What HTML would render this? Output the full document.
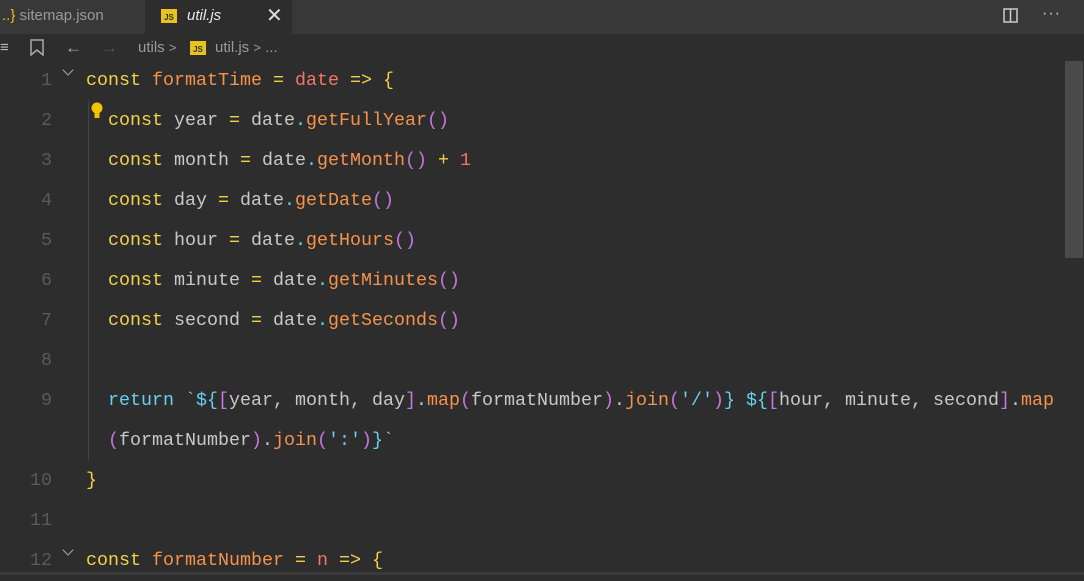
<!DOCTYPE html>
<html><head><meta charset="utf-8"><style>
*{margin:0;padding:0;box-sizing:border-box}
body{width:1084px;height:575px;background:#2d2d2d;overflow:hidden;position:relative;font-family:"Liberation Sans",sans-serif}
.tabs{position:absolute;left:0;top:0;width:1084px;height:34px;background:#383838}
.tab{position:absolute;top:0;height:34px;font-size:15px;color:#9a9a9a;line-height:32px}
.act{left:145px;width:147px;background:#2d2d2d;color:#e8e8e8;font-style:italic}
.js{display:inline-block;width:16px;height:14px;background:#e8c21e;color:#333;font-size:8px;font-style:normal;line-height:18px;text-align:center;vertical-align:middle;font-weight:bold}
.bc{position:absolute;top:34px;left:0;width:1065px;height:27px;font-size:15px;color:#9a9a9a;line-height:27px}
.code{position:absolute;left:0;top:61px;font-family:"Liberation Mono",monospace;font-size:18.33px}
.ln{position:absolute;left:0;width:52px;text-align:right;color:#5a5a5a;height:40px;line-height:40px}
.l{position:absolute;white-space:pre;height:40px;line-height:40px;color:#c8c8c8}
.k{color:#f2d249}.f{color:#f7924a}.p{color:#f4746b}.m{color:#f7924a}.b{color:#c678dd}.c{color:#66d0ef}.y{color:#f2d249}.n{color:#f4746b}.s{color:#66d0ef}
.sb{position:absolute;left:1065px;top:61px;width:18px;height:197px;background:#4a4a4a}
.fold{position:absolute;left:64px;width:8px;height:8px;border-right:1.5px solid #aaa;border-bottom:1.5px solid #aaa;transform:rotate(45deg)}
</style></head><body>
<div class="tabs">
 <div class="tab" style="left:0;width:145px;padding-left:2px"><span style="color:#e8c21e">..}</span> sitemap.json</div>
 <div class="tab act"><span style="position:absolute;left:16px;top:9px" class="js">JS</span><span style="position:absolute;left:42px">util.js</span><span style="position:absolute;left:121px;font-style:normal;font-size:20px;color:#ddd">✕</span></div>
 <svg style="position:absolute;left:1003px;top:8px" width="15" height="15"><rect x="1" y="1" width="13" height="13" fill="none" stroke="#ccc" stroke-width="1.5"/><line x1="7.5" y1="1" x2="7.5" y2="14" stroke="#ccc" stroke-width="1.5"/></svg>
 <div style="position:absolute;left:1042px;top:5px;color:#ccc;font-size:16px;letter-spacing:1px">···</div>
</div>
<div class="bc">
 <span style="position:absolute;left:0;color:#bbb">≡</span>
 <svg style="position:absolute;left:30px;top:5px" width="14" height="17"><path d="M1 1H13V16L7 11L1 16Z" fill="none" stroke="#aaa" stroke-width="1.5"/></svg>
 <span style="position:absolute;left:65px;color:#aaa;font-size:17px">←</span>
 <span style="position:absolute;left:101px;color:#555;font-size:17px">→</span>
 <span style="position:absolute;left:138px">utils <span style="font-size:13px">&gt;</span></span>
 <span class="js" style="position:absolute;left:190px;top:7px">JS</span>
 <span style="position:absolute;left:215px">util.js <span style="font-size:13px">&gt;</span> ...</span>
</div>
<div class="sb"></div>
<div style="position:absolute;left:0;top:572px;width:1084px;height:3px;background:#3a3a3a"></div>
<div style="position:absolute;left:88px;top:101px;width:1px;height:360px;background:#444"></div>
<div class="fold" style="top:66px"></div>
<div class="fold" style="top:546px"></div>
<svg style="position:absolute;left:90px;top:102px" width="14" height="18"><circle cx="7" cy="6" r="5.5" fill="#f2c200"/><rect x="4.5" y="11" width="5" height="5" fill="#f2c200"/></svg>
<div class="code">
 <div class="ln" style="top:0">1</div><div class="ln" style="top:40px">2</div><div class="ln" style="top:80px">3</div><div class="ln" style="top:120px">4</div><div class="ln" style="top:160px">5</div><div class="ln" style="top:200px">6</div><div class="ln" style="top:240px">7</div><div class="ln" style="top:280px">8</div><div class="ln" style="top:320px">9</div><div class="ln" style="top:400px">10</div><div class="ln" style="top:440px">11</div><div class="ln" style="top:480px">12</div>
 <div class="l" style="left:86px;top:0"><span class="k">const</span> <span class="f">formatTime</span> <span class="k">=</span> <span class="p">date</span> <span class="k">=&gt;</span> <span class="y">{</span></div>
 <div class="l" style="left:108px;top:40px"><span class="k">const</span> year <span class="k">=</span> date<span class="c">.</span><span class="m">getFullYear</span><span class="b">()</span></div>
 <div class="l" style="left:108px;top:80px"><span class="k">const</span> month <span class="k">=</span> date<span class="c">.</span><span class="m">getMonth</span><span class="b">()</span> <span class="k">+</span> <span class="n">1</span></div>
 <div class="l" style="left:108px;top:120px"><span class="k">const</span> day <span class="k">=</span> date<span class="c">.</span><span class="m">getDate</span><span class="b">()</span></div>
 <div class="l" style="left:108px;top:160px"><span class="k">const</span> hour <span class="k">=</span> date<span class="c">.</span><span class="m">getHours</span><span class="b">()</span></div>
 <div class="l" style="left:108px;top:200px"><span class="k">const</span> minute <span class="k">=</span> date<span class="c">.</span><span class="m">getMinutes</span><span class="b">()</span></div>
 <div class="l" style="left:108px;top:240px"><span class="k">const</span> second <span class="k">=</span> date<span class="c">.</span><span class="m">getSeconds</span><span class="b">()</span></div>
 <div class="l" style="left:108px;top:320px"><span class="c">return</span> <span class="s">`${</span><span class="b">[</span>year, month, day<span class="b">]</span>.<span class="m">map</span><span class="b">(</span>formatNumber<span class="b">)</span>.<span class="m">join</span><span class="b">(</span><span class="s">'/'</span><span class="b">)</span><span class="s">}</span> <span class="s">${</span><span class="b">[</span>hour, minute, second<span class="b">]</span>.<span class="m">map</span></div>
 <div class="l" style="left:108px;top:360px"><span class="b">(</span>formatNumber<span class="b">)</span>.<span class="m">join</span><span class="b">(</span><span class="s">':'</span><span class="b">)</span><span class="s">}`</span></div>
 <div class="l" style="left:86px;top:400px"><span class="y">}</span></div>
 <div class="l" style="left:86px;top:480px"><span class="k">const</span> <span class="f">formatNumber</span> <span class="k">=</span> <span class="p">n</span> <span class="k">=&gt;</span> <span class="y">{</span></div>
</div>
</body></html>
